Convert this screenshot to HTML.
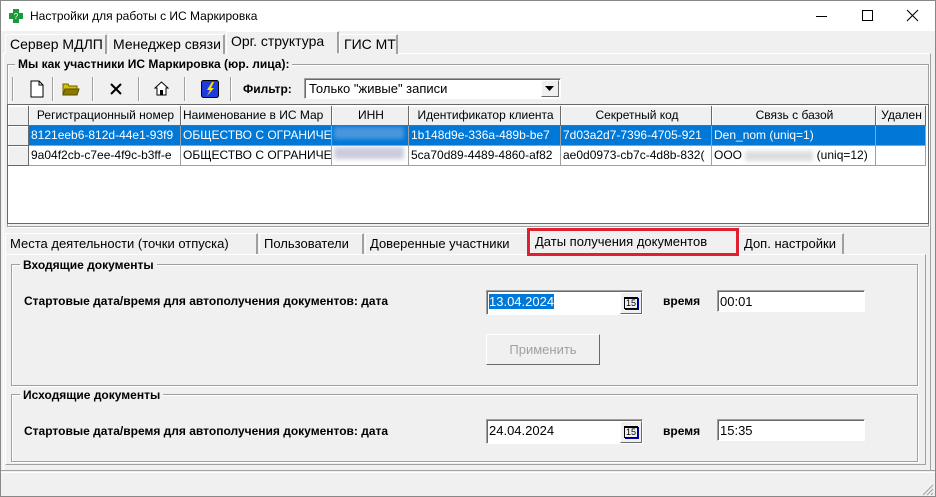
<!DOCTYPE html>
<html><head><meta charset="utf-8"><style>
*{box-sizing:border-box;margin:0;padding:0}
body{width:936px;height:497px;position:relative;background:#f0f0f0;font-family:"Liberation Sans",sans-serif;font-size:12px;color:#000;overflow:hidden}
.a{position:absolute}
.tab{position:absolute;border:1px solid #a0a0a0;border-bottom:none;background:#f0f0f0;border-top-color:#fff;border-left-color:#fff;box-shadow:inset -1px 0 #a0a0a0;padding:2px 4px;font-size:13px;white-space:nowrap}
.grp{position:absolute;border:1px solid #a0a0a0;box-shadow:1px 1px 0 #fff inset, 1px 1px 0 #fff}
.lab{position:absolute;background:#f0f0f0;font-weight:bold;font-size:12px;padding:0 3px;white-space:nowrap}
.edit{position:absolute;background:#fff;border:1px solid #a0a0a0;border-right-color:#fff;border-bottom-color:#fff;box-shadow:inset 1px 1px #696969;font-size:12px;padding:3px 2px}
.cell{position:absolute;height:20px;border-right:1px solid #a0a0a0;border-bottom:1px solid #a0a0a0;white-space:nowrap;overflow:hidden;font-size:12px;line-height:19px;padding-left:2px}
.h{background:#f0f0f0;text-align:center;border-right:1px solid #696969;border-bottom:1px solid #696969;box-shadow:inset 1px 1px #fff}
.sel{background:#0078d7;color:#fff}
.sep{position:absolute;top:77px;width:2px;height:24px;border-left:1px solid #a0a0a0;border-right:1px solid #fff}
.cal{position:absolute;width:22px;height:22px;background:#f0f0f0;border:1px solid #fff;border-right-color:#696969;border-bottom-color:#696969;font-size:9px;text-align:center;line-height:18px}
.cal span{display:inline-block;border:1px solid #000;border-top:2px solid #000;line-height:9px;padding:0 1px;margin-top:4px;box-shadow:1px 1px 0 #00a}
.b{position:absolute;font-weight:bold;font-size:12px;white-space:nowrap}
</style></head><body>
<div class="a" style="left:0;top:0;width:936px;height:31px;background:#fff;border:1px solid #888;border-bottom:none"></div>
<svg class="a" style="left:8px;top:8px" width="16" height="16"><path d="M5 1h6v4h4v6h-4v4H5v-4H1V5h4z" fill="#1a9a3a"/><text x="8" y="11" font-size="8" fill="#fff" text-anchor="middle" font-family="Liberation Sans">?</text></svg>
<div class="a" style="left:30px;top:9px;font-size:12px">Настройки для работы с ИС Маркировка</div>
<div class="a" style="left:816px;top:16px;width:11px;height:1px;background:#000"></div>
<div class="a" style="left:862px;top:10px;width:11px;height:11px;border:1px solid #000"></div>
<svg class="a" style="left:906px;top:9px" width="13" height="13"><path d="M1 1L12 12M12 1L1 12" stroke="#000" stroke-width="1.1"/></svg>
<div class="a" style="left:0;top:31px;width:1px;height:466px;background:#888"></div>
<div class="a" style="left:935px;top:31px;width:1px;height:466px;background:#888"></div>
<div class="a" style="left:0;top:496px;width:936px;height:1px;background:#888"></div>

<div class="a" style="left:3px;top:53px;width:928px;height:418px;border:1px solid #fff;border-right-color:#a0a0a0;border-bottom-color:#a0a0a0"></div>
<div class="tab" style="left:5px;top:34px;width:102px;height:20px;font-size:14px;padding-top:1px">Сервер МДЛП</div>
<div class="tab" style="left:108px;top:34px;width:117px;height:20px;font-size:14px;padding-top:1px">Менеджер связи</div>
<div class="tab" style="left:226px;top:31px;width:113px;height:23px;border-bottom:1px solid #f0f0f0;z-index:2;font-size:14px;padding-top:1px">Орг. структура</div>
<div class="tab" style="left:339px;top:34px;width:59px;height:20px;font-size:14px;padding-top:1px">ГИС МТ</div>

<div class="grp" style="left:7px;top:64px;width:922px;height:163px"></div>
<div class="lab" style="left:15px;top:57px">Мы как участники ИС Маркировка (юр. лица):</div>

<div class="sep" style="left:12px"></div>
<div class="sep" style="left:52px"></div>
<div class="sep" style="left:92px"></div>
<div class="sep" style="left:138px"></div>
<div class="sep" style="left:184px"></div>
<div class="sep" style="left:230px"></div>
<svg class="a" style="left:30px;top:80px" width="14" height="18"><path d="M1 1h8l4 4v12H1z" fill="#fff" stroke="#000"/><path d="M9 1v4h4" fill="none" stroke="#000"/></svg>
<svg class="a" style="left:62px;top:82px" width="18" height="14"><path d="M1 2h5l1 2h8v9H1z" fill="#d4c200" stroke="#6b5e00"/><path d="M3 7h14l-2 6H1z" fill="#8a7a00" stroke="#5a4e00"/></svg>
<svg class="a" style="left:109px;top:82px" width="14" height="14"><path d="M2 2L12 12M12 2L2 12" stroke="#000" stroke-width="2"/></svg>
<svg class="a" style="left:154px;top:81px" width="15" height="15"><path d="M7.5 1L1 7h2v7h9V7h2z" fill="#fff" stroke="#000"/><rect x="6" y="9" width="3" height="5" fill="#000"/></svg>
<svg class="a" style="left:201px;top:80px" width="18" height="18"><rect x=".5" y=".5" width="17" height="17" rx="2" fill="#1c3ce0" stroke="#000"/><path d="M11 2L6 10h3l-3 6 7-8h-3l3-6z" fill="#ffe000"/></svg>
<div class="b" style="left:243px;top:82px">Фильтр:</div>
<div class="edit" style="left:304px;top:78px;width:257px;height:21px;padding:2px 4px;font-size:13px">Только "живые" записи</div>
<div class="a" style="left:541px;top:80px;width:18px;height:17px;background:#f0f0f0;border:1px solid #fff;border-right-color:#696969;border-bottom-color:#696969"></div>
<svg class="a" style="left:545px;top:86px" width="9" height="5"><path d="M0 0h9L4.5 5z" fill="#000"/></svg>

<div class="a" style="left:7px;top:104px;width:922px;height:120px;background:#fff;border:1px solid #696969"></div>
<div class="cell h" style="left:8px;top:106px;width:21px"></div>
<div class="cell h" style="left:29px;top:106px;width:152px">Регистрационный номер</div>
<div class="cell h" style="left:181px;top:106px;width:151px;text-align:left">Наименование в ИС Мар</div>
<div class="cell h" style="left:332px;top:106px;width:77px">ИНН</div>
<div class="cell h" style="left:409px;top:106px;width:152px">Идентификатор клиента</div>
<div class="cell h" style="left:561px;top:106px;width:151px">Секретный код</div>
<div class="cell h" style="left:712px;top:106px;width:164px">Связь с базой</div>
<div class="cell h" style="left:876px;top:106px;width:50px">Удален</div>

<div class="cell h" style="left:8px;top:126px;width:21px"></div>
<div class="cell sel" style="left:29px;top:126px;width:152px">8121eeb6-812d-44e1-93f9</div>
<div class="cell sel" style="left:181px;top:126px;width:151px">ОБЩЕСТВО С ОГРАНИЧЕН</div>
<div class="cell sel" style="left:332px;top:126px;width:77px"><span style="display:inline-block;width:70px;height:12px;background:#4a96dc;filter:blur(2px)"></span></div>
<div class="cell sel" style="left:409px;top:126px;width:152px">1b148d9e-336a-489b-be7</div>
<div class="cell sel" style="left:561px;top:126px;width:151px">7d03a2d7-7396-4705-921</div>
<div class="cell sel" style="left:712px;top:126px;width:164px">Den_nom (uniq=1)</div>
<div class="cell sel" style="left:876px;top:126px;width:50px"></div>

<div class="cell h" style="left:8px;top:146px;width:21px"></div>
<div class="cell" style="left:29px;top:146px;width:152px">9a04f2cb-c7ee-4f9c-b3ff-e</div>
<div class="cell" style="left:181px;top:146px;width:151px">ОБЩЕСТВО С ОГРАНИЧЕН</div>
<div class="cell" style="left:332px;top:146px;width:77px"><span style="display:inline-block;width:70px;height:12px;background:#ccd;filter:blur(2px)"></span></div>
<div class="cell" style="left:409px;top:146px;width:152px">5ca70d89-4489-4860-af82</div>
<div class="cell" style="left:561px;top:146px;width:151px">ae0d0973-cb7c-4d8b-832(</div>
<div class="cell" style="left:712px;top:146px;width:164px">ООО <span style="display:inline-block;width:68px;height:10px;background:#ddd;filter:blur(2px);vertical-align:middle"></span> (uniq=12)</div>
<div class="cell" style="left:876px;top:146px;width:50px"></div>

<div class="a" style="left:5px;top:254px;width:921px;height:211px;border:1px solid #fff;border-right-color:#a0a0a0;border-bottom-color:#a0a0a0"></div>
<div class="tab" style="left:5px;top:233px;width:253px;height:21px">Места деятельности (точки отпуска)</div>
<div class="tab" style="left:259px;top:233px;width:105px;height:21px">Пользователи</div>
<div class="tab" style="left:365px;top:233px;width:164px;height:21px">Доверенные участники</div>
<div class="tab" style="left:530px;top:230px;width:208px;height:25px;border-bottom:1px solid #f0f0f0;z-index:2;padding-top:3px">Даты получения документов</div>
<div class="a" style="left:527px;top:228px;width:212px;height:28px;border:3px solid #e02030;z-index:3"></div>
<div class="tab" style="left:739px;top:233px;width:105px;height:21px">Доп. настройки</div>

<div class="grp" style="left:11px;top:264px;width:907px;height:122px"></div>
<div class="lab" style="left:20px;top:258px">Входящие документы</div>
<div class="b" style="left:24px;top:294px">Стартовые дата/время для автополучения документов: дата</div>
<div class="edit" style="left:486px;top:290px;width:157px;height:25px;font-size:13px"><span style="background:#0078d7;color:#fff">13.04.2024</span></div>
<div class="cal" style="left:620px;top:292px"><span>15</span></div>
<div class="b" style="left:663px;top:294px">время</div>
<div class="edit" style="left:717px;top:290px;width:148px;height:22px;font-size:13px">00:01</div>
<div class="a" style="left:486px;top:334px;width:114px;height:31px;border:1px solid #fff;border-right-color:#696969;border-bottom-color:#696969;color:#a0a0a0;font-size:13px;text-align:center;line-height:29px">Применить</div>

<div class="grp" style="left:11px;top:394px;width:907px;height:68px"></div>
<div class="lab" style="left:20px;top:388px">Исходящие документы</div>
<div class="b" style="left:24px;top:424px">Стартовые дата/время для автополучения документов: дата</div>
<div class="edit" style="left:486px;top:419px;width:157px;height:25px;font-size:13px">24.04.2024</div>
<div class="cal" style="left:620px;top:421px"><span>15</span></div>
<div class="b" style="left:663px;top:424px">время</div>
<div class="edit" style="left:717px;top:419px;width:148px;height:22px;font-size:13px">15:35</div>

<div class="a" style="left:1px;top:470px;width:934px;height:1px;background:#a0a0a0"></div>
<div class="a" style="left:1px;top:472px;width:934px;height:1px;background:#fff"></div>
<svg class="a" style="left:920px;top:482px" width="14" height="14"><path d="M13 3L3 13M13 7L7 13M13 11L11 13" stroke="#a0a0a0"/></svg>
</body></html>
